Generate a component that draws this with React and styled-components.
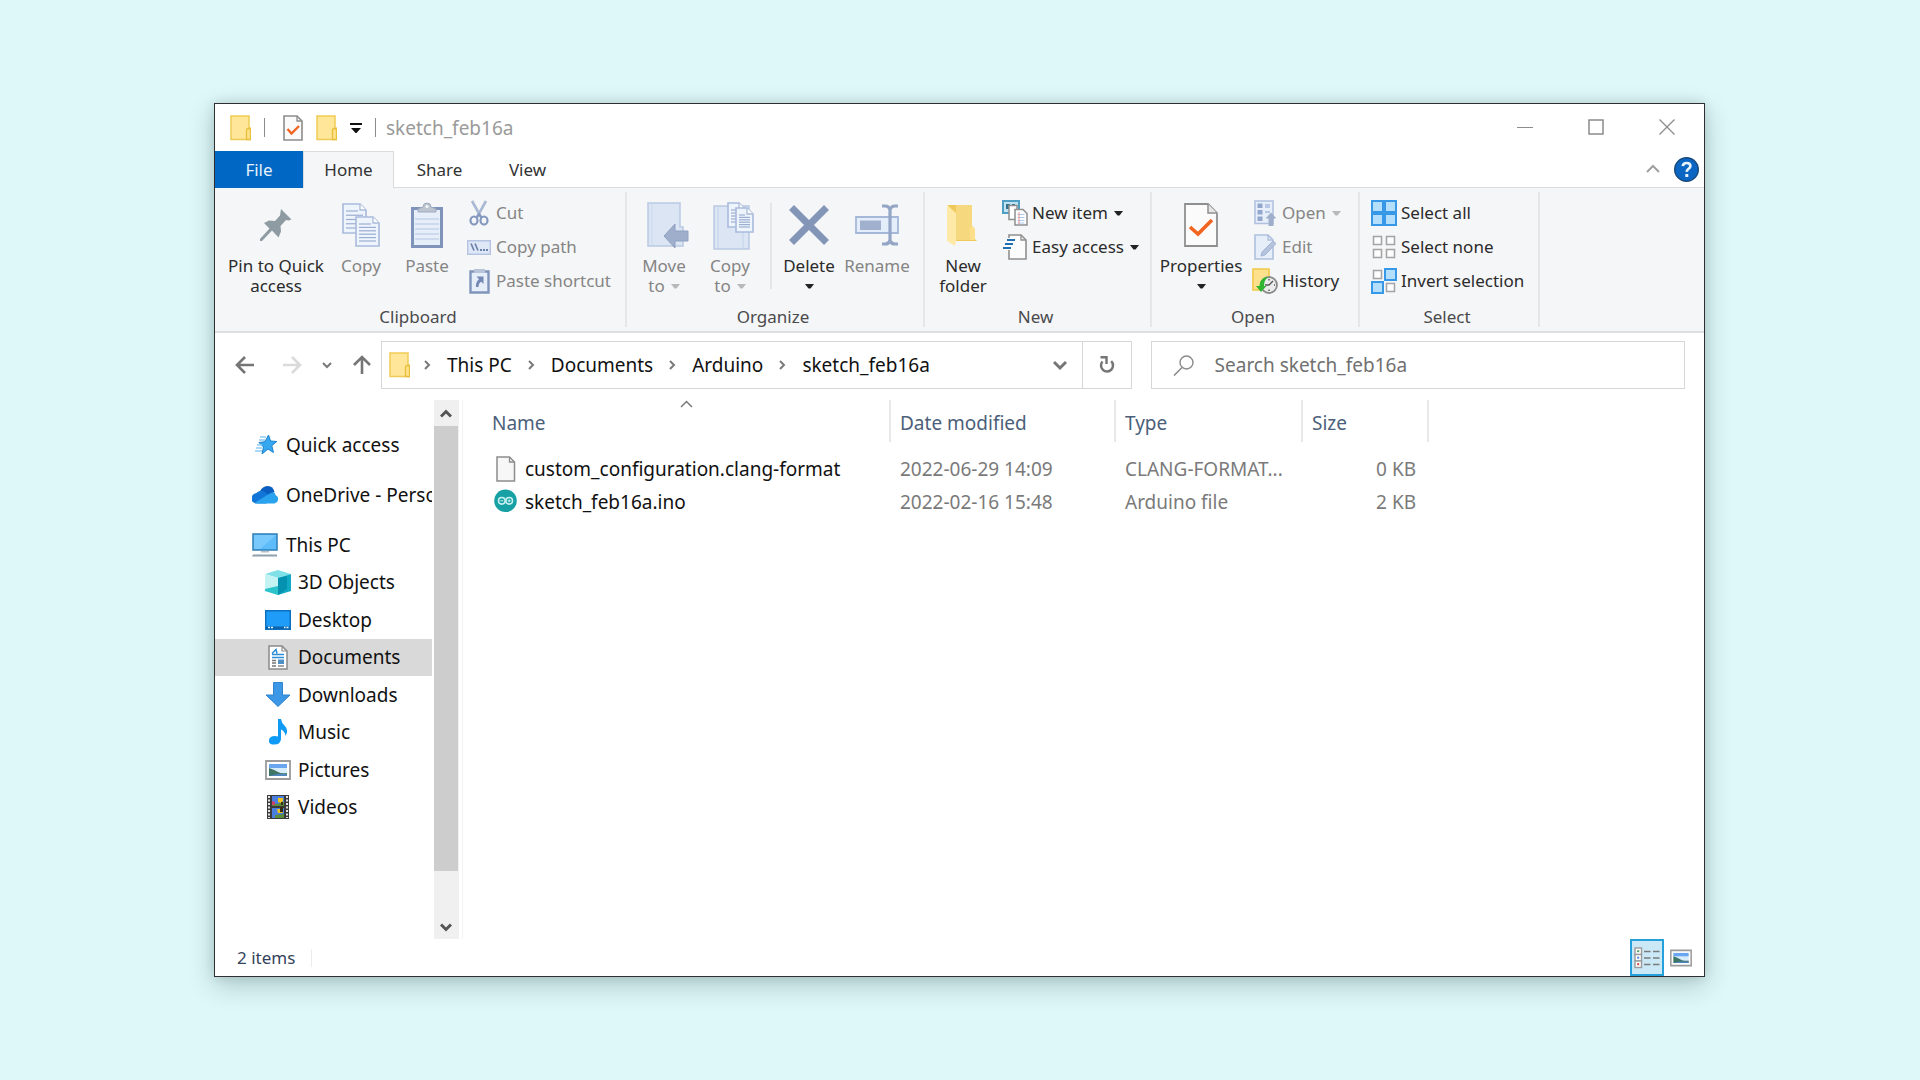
import React from "react";
import styled, { createGlobalStyle, css } from "styled-components";

const GlobalStyle = createGlobalStyle`
  *, *::before, *::after { box-sizing: border-box; }
  body {
    margin: 0;
    background: #def7f8;
    color: #111;
    font-family: "Noto Sans", "Open Sans", sans-serif;
    font-size: 19px;
    line-height: 26px;
  }
  button, input { font: inherit; color: inherit; }
  svg { display: block; flex: none; }
`;

const plainButton = css`
  border: 0;
  padding: 0;
  background: none;
  white-space: nowrap;
`;

/* ---------- window ---------- */

const Page = styled.main`
  display: flex;
  min-height: 100vh;
  padding: 103px 215px 103px 214px;
`;

const Window = styled.section`
  flex: 1;
  min-width: 0;
  display: flex;
  flex-direction: column;
  background: #fff;
  border: 1px solid #2f2f33;
  box-shadow: 0 8px 24px rgba(20, 50, 50, 0.24), 0 0 10px rgba(20, 50, 50, 0.12);
`;

const TitleBar = styled.header`
  display: flex;
  align-items: center;
  height: 47px;
  padding: 0 2px 0 15px;
`;

const QuickTools = styled.div`
  display: flex;
  align-items: center;
  gap: 13px;
`;

const ToolButton = styled.button`
  ${plainButton}
`;

const Bar = styled.span`
  width: 1px;
  height: 19px;
  background: #8c8c8c;
  margin-right: ${(p) => (p.$wide ? "5px" : "0")};
`;

const Title = styled.h1`
  flex: 1;
  margin: 0;
  padding-left: 10px;
  font-size: 19px;
  font-weight: 400;
  color: #9a9a9a;
`;

const CaptionButton = styled.button`
  ${plainButton}
  display: grid;
  place-items: center;
  align-self: flex-start;
  width: 71px;
  height: 45px;
`;

/* ---------- tabs ---------- */

const TabRow = styled.nav`
  display: flex;
  align-items: center;
  height: 37px;
  padding-right: 5px;
  border-bottom: 1px solid #dadbdc;
`;

const Tab = styled.button`
  ${plainButton}
  align-self: stretch;
  width: ${(p) => p.$width}px;
  margin-bottom: -1px;
  font-size: 17px;
  color: #333;
  ${(p) => p.$kind === "file" && "background: #0067c5; color: #e8f2fb;"}
  ${(p) =>
    p.$kind === "active" &&
    "background: #f5f6f7; border: 1px solid #dadbdc; border-bottom: 0;"}
`;

const Spacer = styled.span`
  flex: 1;
`;

const HelpButton = styled.button`
  ${plainButton}
  margin-left: 14px;
`;

/* ---------- ribbon ---------- */

const Ribbon = styled.div`
  display: flex;
  padding: 4px 0;
  background: #f5f6f7;
  border-bottom: 2px solid #dddfe1;
  font-size: 17px;
  line-height: 20px;
`;

const Group = styled.section`
  width: ${(p) => p.$width}px;
  height: 135px;
  display: flex;
  flex-direction: column;
  justify-content: space-between;
  border-right: 2px solid #e4e6e8;
`;

const GroupBody = styled.div`
  display: flex;
  padding-left: ${(p) => p.$inset}px;
`;

const GroupLabel = styled.h2`
  margin: 0;
  padding-right: 4px;
  font-size: 17px;
  font-weight: 400;
  text-align: center;
  color: #4a4a4d;
`;

const BigButton = styled.button`
  ${plainButton}
  width: ${(p) => p.$width}px;
  display: flex;
  flex-direction: column;
  align-items: center;
  padding-top: 10px;
  color: ${(p) => (p.$off ? "#858585" : "#2b2b2b")};
`;

const BigIcon = styled.span`
  display: grid;
  place-items: center;
  height: 46px;
  margin-bottom: 8px;
`;

const Line = styled.span`
  display: flex;
  align-items: center;
  gap: 6px;
  height: 20px;
`;

const InnerRule = styled.span`
  width: 2px;
  height: 86px;
  margin: 11px 4px 0 7px;
  background: #e4e6e8;
`;

const SmallList = styled.div`
  display: flex;
  flex-direction: column;
  padding-top: 4px;
  margin-left: ${(p) => p.$gap}px;
`;

const SmallButton = styled.button`
  ${plainButton}
  display: flex;
  align-items: center;
  height: 34px;
  color: ${(p) => (p.$off ? "#858585" : "#2b2b2b")};
`;

const SmallIcon = styled.span`
  display: grid;
  place-items: center;
  width: 26px;
  margin-right: 4px;
`;

const CaretSlot = styled.span`
  margin-left: 6px;
`;

/* ---------- address row ---------- */

const AddressRow = styled.div`
  display: flex;
  align-items: center;
  height: 64px;
  padding: 0 19px 0 20px;
`;

const NavButtons = styled.div`
  display: flex;
  align-items: center;
  gap: 20px;
  margin-right: 9px;
  button:first-child { margin-right: 7px; }
`;

const AddressBox = styled.div`
  flex: 750 1 750px;
  min-width: 0;
  display: flex;
  align-items: center;
  height: 48px;
  padding-left: 7px;
  border: 1px solid #d6d6d6;
`;

const Crumbs = styled.ol`
  display: flex;
  align-items: center;
  flex: 1;
  margin: 0;
  padding: 0 0 0 12px;
  list-style: none;
`;

const Crumb = styled.li`
  display: flex;
  align-items: center;
  gap: 15px;
  margin-right: 14px;
`;

const Link = styled.a`
  color: inherit;
  text-decoration: none;
  white-space: nowrap;
`;

const EndButton = styled.button`
  ${plainButton}
  display: grid;
  place-items: center;
  width: ${(p) => p.$width}px;
  height: 46px;
  border-left: ${(p) => (p.$ruled ? "1px solid #d6d6d6" : "0")};
`;

const SearchBox = styled.label`
  flex: 534 1 534px;
  min-width: 0;
  display: flex;
  align-items: center;
  gap: 21px;
  height: 48px;
  margin-left: 19px;
  padding-left: 21px;
  border: 1px solid #d6d6d6;
`;

const SearchInput = styled.input`
  flex: 1;
  min-width: 0;
  padding: 0;
  border: 0;
  outline: 0;
  background: none;
  &::placeholder { color: #707070; opacity: 1; }
`;

/* ---------- body ---------- */

const Body = styled.div`
  flex: 1;
  display: flex;
  min-height: 0;
  padding-top: 3px;
`;

const Sidebar = styled.nav`
  width: 217px;
  padding-top: 26px;
  overflow: hidden;
`;

const NavItem = styled.a`
  display: flex;
  align-items: center;
  gap: ${(p) => (p.$child ? "7px" : "8px")};
  height: ${(p) => (p.$root ? "38px" : "auto")};
  margin-bottom: ${(p) => (p.$root ? "12px" : "0")};
  padding-left: ${(p) => (p.$child ? "50px" : "37px")};
  background: ${(p) => (p.$current ? "#d9d9d9" : "transparent")};
  color: #111;
  text-decoration: none;
  white-space: nowrap;
`;

const NavIcon = styled.span`
  display: grid;
  place-items: center;
  width: 26px;
`;

const Tree = styled.div`
  display: grid;
  grid-auto-rows: 1fr;
  height: 300px;
`;

const ScrollTrack = styled.div`
  display: flex;
  flex-direction: column;
  width: 25px;
  margin-left: 2px;
  background: #f0f0f0;
`;

const ScrollButton = styled.button`
  ${plainButton}
  display: grid;
  place-items: center;
  height: 26px;
  padding: 2px 1px 0 0;
`;

const ScrollThumb = styled.div`
  flex: 445;
  margin-right: 1px;
  background: #cdcdcd;
`;

const ScrollRest = styled.div`
  flex: 42;
`;

const Files = styled.div`
  flex: 1;
  margin-left: 3px;
  border-left: 1px solid #f3f3f3;
`;

const Table = styled.table`
  width: 966px;
  table-layout: fixed;
  border-collapse: separate;
  border-spacing: 0;
`;

const Head = styled.th`
  position: relative;
  width: ${(p) => p.$width}px;
  height: 42px;
  padding: 3px 0 0 ${(p) => (p.$first ? "29px" : "9px")};
  border-right: 2px solid #e8e8e8;
  color: #4c607a;
  font-weight: 400;
  text-align: left;
`;

const SortMark = styled.span`
  position: absolute;
  top: 0;
  left: 217px;
`;

const GapRow = styled.tr`
  height: 10px;
`;

const Cell = styled.td`
  height: 33px;
  padding: 0 ${(p) => (p.$end ? "13px" : "0")} 0 ${(p) => (p.$first ? "31px" : "9px")};
  color: ${(p) => (p.$first ? "#111" : "#7a7a7a")};
  text-align: ${(p) => (p.$end ? "right" : "left")};
  white-space: nowrap;
`;

const FileName = styled.span`
  display: flex;
  align-items: center;
  gap: 8px;
`;

/* ---------- status bar ---------- */

const StatusBar = styled.footer`
  display: flex;
  align-items: center;
  height: 37px;
  padding: 0 6px 0 22px;
  font-size: 17px;
  color: #34435c;
`;

const StatusRule = styled.span`
  width: 1px;
  height: 18px;
  margin-left: 16px;
  background: #ececec;
`;

const ViewButton = styled.button`
  ${plainButton}
  display: grid;
  place-items: center;
  width: 34px;
  height: 37px;
  ${(p) => p.$on && "background: #cbe8f6; border: 2px solid #26a0da;"}
`;

/* ---------- icons ---------- */

const Svg = ({ w, h, children, ...rest }) => (
  <svg width={w} height={h} viewBox={`0 0 ${w} ${h}`} fill="none" aria-hidden="true" {...rest}>
    {children}
  </svg>
);

const Caret = ({ color = "#222" }) => (
  <Svg w={9} h={5}>
    <path d="M0 0h9L5.500 4.500h-2z" fill={color} />
  </Svg>
);

const FolderIcon = () => (
  <Svg w={21} h={26}>
    <path d="M1 1h18v12h1.500v11.500H1z" fill="#ffe699" stroke="#efcb55" strokeWidth="1.500" />
    <path d="M16.500 24.500V15.500q0-2 2-2t2 2v9z" fill="#ffe28a" stroke="#e8bf3c" strokeWidth="1.300" />
  </Svg>
);

const CheckDocIcon = () => (
  <Svg w={20} h={26}>
    <path d="M1 1h13l5 5v19H1z" fill="#fafafa" stroke="#8d8d8d" strokeWidth="1.600" />
    <path d="M14 1v5h5" stroke="#8d8d8d" strokeWidth="1.300" />
    <path d="M4.500 14l4 4.500L16 11" stroke="#f2641f" strokeWidth="2.400" />
  </Svg>
);

const CustomizeIcon = () => (
  <Svg w={12} h={10}>
    <path d="M0 0h12v2H0zM1 5h10L6.500 10h-1z" fill="#111" />
  </Svg>
);

const Chevron = ({ dir = "down", size = 6, color = "#7a7a7a", stroke = 2 }) => {
  const turn = { down: 0, up: 180, right: -90 }[dir];
  const box = size * 2 + 2;
  const c = box / 2;
  return (
    <Svg w={box} h={box}>
      <path
        d={`M1 ${c - size / 2}L${c} ${c + size / 2}L${box - 1} ${c - size / 2}`}
        stroke={color}
        strokeWidth={stroke}
        transform={`rotate(${turn} ${c} ${c})`}
      />
    </Svg>
  );
};

const HelpIcon = () => (
  <Svg w={25} h={25}>
    <circle cx="12.500" cy="12.500" r="11.800" fill="#0a66c2" stroke="#17497c" strokeWidth="1.400" />
    <path d="M8.800 9.200q.3-3.200 3.900-3.200t3.700 3q0 1.700-1.900 2.900t-1.700 3" stroke="#e9f3fc" strokeWidth="2.700" />
    <path d="M11.300 17h3v3h-3z" fill="#e9f3fc" />
  </Svg>
);

const PinIcon = () => (
  <Svg w={32} h={32}>
    <path
      d="M21 0l10.500 10.500-3 1-2.500-.5-5.500 6 .5 5.500-2.500 6-6.500-7L2 32H0v-2L9.500 19.500 4 14l5-2.500 6 .5 5-5.500z"
      fill="#8f9ba2"
    />
  </Svg>
);

const Sheet = ({ x, y, w, h, rows }) => {
  const step = (h - 12) / (rows - 1);
  return (
    <g>
      <path d={`M${x} ${y}h${w - 6}l6 6v${h - 6}h-${w}z`} fill="#eef4fc" stroke="#a9badb" strokeWidth="1.600" />
      <path d={`M${x + w - 6} ${y}v6h6`} stroke="#a9badb" strokeWidth="1.300" fill="#fff" />
      {Array.from({ length: rows }, (_, i) => (
        <path
          key={i}
          d={`M${x + 3} ${y + 7 + i * step}h${i === 0 ? w - 11 : w - 6}`}
          stroke="#9badd0"
          strokeWidth="1.200"
        />
      ))}
    </g>
  );
};

const CopyIcon = () => (
  <Svg w={38} h={44}>
    <Sheet x={1} y={1} w={23} h={29} rows={5} />
    <Sheet x={14} y={14} w={23} h={29} rows={6} />
  </Svg>
);

const PasteIcon = () => (
  <Svg w={32} h={46}>
    <path d="M1.500 6.500h29v38h-29z" fill="#e6eefa" stroke="#8094bb" strokeWidth="3" />
    <path d="M4 17h24M4 22h24M4 27h24M4 32h24M4 37h24" stroke="#c5d3ea" strokeWidth="1.300" />
    <path d="M7 10V7l5-2q0-4 4-4t4 4l5 2v3z" fill="#bcc4d0" stroke="#a0abbe" />
    <circle cx="16" cy="4.500" r="1.500" fill="#f5f6f7" />
  </Svg>
);

const CutIcon = () => (
  <Svg w={20} h={26}>
    <path d="M3 1l9.500 17M17 1L7.500 18" stroke="#a9b8d3" strokeWidth="2.600" />
    <ellipse cx="5" cy="20.500" rx="3.500" ry="4" stroke="#8397bf" strokeWidth="2.200" />
    <ellipse cx="15" cy="20.500" rx="3.500" ry="4" stroke="#8397bf" strokeWidth="2.200" />
    <path d="M8 17l2-3 2 3" stroke="#8397bf" strokeWidth="2" />
  </Svg>
);

const CopyPathIcon = () => (
  <Svg w={24} h={15}>
    <path d="M.7.7h22.600v13.600H.7z" fill="#dfe8f6" stroke="#b5c4e0" strokeWidth="1.400" />
    <path d="M4 3.500l3 7M8 3.500l3 7" stroke="#6d82ad" strokeWidth="1.700" />
    <path d="M13 9h2v2h-2zM16 9h2v2h-2zM19 9h2v2h-2z" fill="#6d82ad" />
  </Svg>
);

const PasteShortcutIcon = () => (
  <Svg w={21} h={26}>
    <path d="M1.500 3.500h18v21h-18z" fill="#e6eefa" stroke="#8094bb" strokeWidth="2.400" />
    <path d="M5 1h11v4H5z" fill="#b7c3d8" />
    <path d="M7.500 8.500h7v7.500l-2.200-2.200q-2.800 1.200-2.800 5.200H7q-.5-5 3-7.800z" fill="#7488b3" />
  </Svg>
);

const MoveToIcon = () => (
  <Svg w={50} h={46}>
    <g transform="translate(8 0)">
      <path d="M1 1h32v24h3v19H1z" fill="#dbe5f4" stroke="#b9c9e2" strokeWidth="1.500" />
      <path d="M5 1v43" stroke="#cbd8ec" />
      <path d="M17 34L28 22v7h13v10H28v7z" fill="#9eaecb" stroke="#8fa1c3" />
    </g>
  </Svg>
);

const CopyToIcon = () => (
  <Svg w={50} h={48}>
    <g transform="translate(8 0)">
      <path d="M1 4h35v43H1z" fill="#dbe5f4" stroke="#b9c9e2" strokeWidth="1.500" />
      <path d="M5 4v43M30 30v16" stroke="#c3d2e8" />
      <Sheet x={15} y={1} w={17} h={24} rows={5} />
      <Sheet x={23} y={6} w={17} h={24} rows={6} />
    </g>
  </Svg>
);

const DeleteIcon = () => (
  <Svg w={40} h={40}>
    <path d="M2.500 2.500l35 35M37.500 2.500l-35 35" stroke="#8496b8" strokeWidth="7" />
  </Svg>
);

const RenameIcon = () => (
  <Svg w={44} h={42}>
    <path d="M1 13h42v16H1z" fill="#e4eefb" stroke="#a6b8d8" strokeWidth="1.800" />
    <path d="M5 16.500h21v9.500H5z" fill="#a0b0cd" />
    <path d="M27 2h3q4 0 5 4v30q-1 4-5 4h-3M43 2h-3q-4 0-5 4M43 40h-3q-4 0-5-4" stroke="#94a6c6" strokeWidth="3.200" />
  </Svg>
);

const NewFolderIcon = () => (
  <Svg w={32} h={43}>
    <path d="M1 1h24v21l3 3v10l2 2H9z" fill="#eec95a" />
    <path d="M9 1h16v35H9z" fill="#f6d97e" />
    <path d="M0 1l9 8v27l-1 6-8-5z" fill="#ffe9a6" />
    <path d="M25 22l3 3v11h-5V24z" fill="#ffe08a" />
  </Svg>
);

const NewItemIcon = () => (
  <Svg w={26} h={26}>
    <path d="M1 1h16v12H1z" fill="#bfe3f3" stroke="#4f9fc4" strokeWidth="2" />
    <path d="M4 4h4v5H4zM10 4h3v5h-3z" fill="#38708f" />
    <path d="M7 5.500h8v14H7z" fill="#fff" stroke="#8f8f8f" strokeWidth="1.500" />
    <path d="M13 9.500h8l4 4V25H13z" fill="#fff" stroke="#8f8f8f" strokeWidth="1.500" />
    <path d="M15.500 14.500h7M15.500 17.500h7M15.500 20.500h7M15.500 23h7" stroke="#a9c9ee" />
    <path d="M17 12v12" stroke="#ef8f8f" />
  </Svg>
);

const EasyAccessIcon = () => (
  <Svg w={25} h={26}>
    <path d="M6 1h12l5 5v19H6z" fill="#fcfcfc" stroke="#8f8f8f" strokeWidth="1.600" />
    <path d="M18 1v5h5" stroke="#8f8f8f" strokeWidth="1.300" />
    <path d="M5 6h7M3 10h7M1 14h7" stroke="#fff" strokeWidth="4" />
    <path d="M4 6h8M2 10h8M0 14h8" stroke="#1f6fb2" strokeWidth="2" />
  </Svg>
);

const PropertiesIcon = () => (
  <Svg w={34} h={44}>
    <path d="M1 1h23l9 9v33H1z" fill="#fbfbfc" stroke="#8f8f8f" strokeWidth="1.800" />
    <path d="M24 1v9h9" fill="#e6e6e6" stroke="#8f8f8f" strokeWidth="1.500" />
    <path d="M6 24l8 7L28 17" stroke="#f2641f" strokeWidth="3.600" />
  </Svg>
);

const OpenIcon = () => (
  <Svg w={22} h={26}>
    <path d="M1 1h18v22.500H1z" fill="#e6eefa" stroke="#b0c0de" strokeWidth="1.500" />
    <path d="M3.500 3.500h5v4.500h-5zM3.500 10h5v4.500h-5zM3.500 16.500h5V21h-5z" fill="#93a6cb" />
    <path d="M11 5h5M11 7h5M11 12h5" stroke="#a9badb" strokeWidth="1.300" />
    <path d="M17 12.500l5.500 6H19.500V26h-5v-7.500h-3z" fill="#9fafcb" />
  </Svg>
);

const EditIcon = () => (
  <Svg w={22} h={26}>
    <path d="M1 1h13l5 5v19H1z" fill="#e6eefa" stroke="#b0c0de" strokeWidth="1.600" />
    <path d="M14 1v5h5" stroke="#b0c0de" strokeWidth="1.300" />
    <path d="M7 22l1-4L19 7l3 2.500L11 21z" fill="#b5c3dc" stroke="#a2b3d3" />
  </Svg>
);

const HistoryIcon = () => (
  <Svg w={26} h={26}>
    <path d="M1 1h16v21H1z" fill="#ffe08c" stroke="#f0c948" strokeWidth="1.600" />
    <circle cx="17" cy="17" r="8" fill="#ececec" stroke="#8b8b8b" strokeWidth="1.800" />
    <path d="M17 17l4-4M17 17h-4M17 11v1.500M17 21.500V23M22 17h1" stroke="#555" strokeWidth="1.400" />
    <path d="M14 9q-6 1.500-6.500 9H4l5 6 5.500-6H12q0-6 4-9z" fill="#2fb52f" />
  </Svg>
);

const Tiles = ({ on }) => (
  <Svg w={26} h={26}>
    {[0, 1, 2, 3].map((i) => {
      const x = (i % 2) * 13;
      const y = Math.floor(i / 2) * 13;
      return on[i] ? (
        <rect key={i} x={x + 1} y={y + 1} width="11" height="11" fill="#b3defc" stroke="#3698e6" strokeWidth="2" />
      ) : (
        <rect key={i} x={x + 2.500} y={y + 2.500} width="8" height="8" fill="#fdfdfd" stroke="#a3a3a3" strokeWidth="1.500" />
      );
    })}
  </Svg>
);

const Arrow = ({ dir, color = "#757575" }) => (
  <Svg w={20} h={20}>
    <path
      d="M10 2L2 10l8 8M2 10h17"
      stroke={color}
      strokeWidth="2.600"
      transform={`rotate(${{ left: 0, right: 180, up: 90 }[dir]} 10 10)`}
    />
  </Svg>
);

const RefreshIcon = () => (
  <Svg w={18} h={20}>
    <path d="M13.200 6.200A6 6 0 1 1 4.500 6.500" stroke="#757575" strokeWidth="2.500" />
    <path d="M2.500 2.200h6v6.800" stroke="#757575" strokeWidth="2.400" />
  </Svg>
);

const SearchIcon = () => (
  <Svg w={21} h={21}>
    <circle cx="13.500" cy="7.500" r="6.500" stroke="#8a8a8a" strokeWidth="1.400" />
    <path d="M9 12.500L1 20.500" stroke="#8a8a8a" strokeWidth="1.600" />
  </Svg>
);

const StarIcon = () => (
  <Svg w={24} h={20}>
    <path d="M15.500 0l2 6 6.300.5-5 4.200 1.700 6.800-5.500-3.500L9 19l1.500-7L6 7.500l6-.8z" fill="#36a8ef" stroke="#1b82cf" />
    <path d="M7 2h6M6 5h6M4 10h5M3 13h6M2 16h7" stroke="#8fcbf5" strokeWidth="1.300" />
  </Svg>
);

const CloudIcon = () => (
  <Svg w={26} h={18}>
    <path d="M8 5q3-5 8-5t6.500 6L14 11z" fill="#0a5fc0" />
    <path d="M5 17.500a5 5 0 0 1-1-10.200Q8 3 12.500 6l6 4-4 7.500z" fill="#1176d8" />
    <path d="M3 16.500L17 8q6-4 6.500 1a4.500 4.500 0 0 1-1 8.500H5z" fill="#2aa3ee" />
  </Svg>
);

const PcIcon = () => (
  <Svg w={26} h={24}>
    <path d="M1 1h24v16H1z" fill="#5fbcfb" stroke="#2d7fb8" strokeWidth="1.500" />
    <path d="M2 2h22L8 16H2z" fill="#8bd2ff" opacity=".6" />
    <path d="M9 18h8v1.500H9z" fill="#b4c1cb" />
    <path d="M1 21.500h24v2H0z" fill="#8fa0ae" />
  </Svg>
);

const CubeIcon = () => (
  <Svg w={26} h={25}>
    <path d="M0 4L13 0l13 4-13 4z" fill="#7fe0e8" />
    <path d="M0 4l13 4v17L0 21z" fill="#c5f3f3" />
    <path d="M26 4L13 8v17l13-4z" fill="#12a9c4" />
    <path d="M13 8l9-2v13l-9 6z" fill="#0592b0" />
    <path d="M0 19l13-3v9L0 21z" fill="#2dc3cb" />
  </Svg>
);

const DesktopIcon = () => (
  <Svg w={26} h={20}>
    <path d="M.7.7h24.600v18.600H.7z" fill="#1e9cf7" stroke="#0c6fc0" strokeWidth="1.400" />
    <path d="M1 16.500h24v2.500H1z" fill="#0b62ad" />
    <path d="M3 17.500h2M6 17.500h2M19 17.500h1.500M21.500 17.500h2" stroke="#e7f5ff" strokeWidth="1.300" />
  </Svg>
);

const DocumentsIcon = () => (
  <Svg w={20} h={25}>
    <path d="M1 1h13l5 5v18H1z" fill="#fff" stroke="#8a8a8a" strokeWidth="1.500" />
    <path d="M14 1v5h5" stroke="#8a8a8a" strokeWidth="1.200" />
    <path d="M4 8.500l4-4 1 4M4 12.500h12M4 9.500h12" stroke="#2a8dd6" strokeWidth="1.500" />
    <path d="M4 15.500h4M4 18h4M4 21h4" stroke="#777" strokeWidth="1.300" />
    <path d="M10 14.500h6V19h-6z" fill="#4d90c8" />
    <path d="M10 21h6" stroke="#777" strokeWidth="1.300" />
  </Svg>
);

const DownloadIcon = () => (
  <Svg w={26} h={25}>
    <path d="M8.500.500h9V13H25L13 24.500 1 13h7.500z" fill="#3c98e6" stroke="#2f83cf" />
  </Svg>
);

const MusicIcon = () => (
  <Svg w={19} h={26}>
    <path d="M9 0h3q.5 4 3.500 6.500t2.500 7l-1.500 3.500q-.5-5-4.500-6.500V20q-.5 5.500-6.500 5.500T0 21.500q0-4.500 6-4.500l3 .5z" fill="#0f9bf5" />
  </Svg>
);

const PictureIcon = ({ w = 26, h = 20 }) => (
  <svg width={w} height={h} viewBox="0 0 26 20" fill="none" aria-hidden="true">
    <path d="M1 1h24v18H1z" fill="#fff" stroke="#9b9b9b" strokeWidth="1.800" />
    <path d="M4 4h18v12H4z" fill="#d7ecfb" />
    <path d="M4 4h18v4H4z" fill="#6aa5f0" />
    <path d="M4 8q6 2 9 4t9 1v3H4z" fill="#3f7564" />
    <path d="M12 14h10v2H4z" fill="#4f86c0" />
  </svg>
);

const VideoIcon = () => (
  <Svg w={22} h={24}>
    <path d="M0 0h22v24H0z" fill="#3a3a3a" />
    <path d="M2 1v22M20 1v22" stroke="#e6e6e6" strokeWidth="2" strokeDasharray="2 1.500" />
    <path d="M5 1h12v10H5zM5 13h12v10H5z" fill="#4b7fdf" />
    <path d="M5 8l5 1 7-2v4H5zM8 20l9-1v4H8z" fill="#5b8d3c" />
    <path d="M11 3h5v3l-2 2-3-1zM10 14h4l2 4h-5z" fill="#f0c21c" />
    <path d="M5 6l3 1v3H5z" fill="#d0406a" />
    <path d="M13 12h3v5h-3zM14 7h2v3h-2z" fill="#3b2d12" />
  </Svg>
);

const BlankFileIcon = () => (
  <Svg w={23} h={26}>
    <path d="M3 1h12.500l5 5v19H3z" fill="#f7f7f7" stroke="#8d8d8d" strokeWidth="1.500" />
    <path d="M15.500 1v5h5" stroke="#8d8d8d" strokeWidth="1.300" />
  </Svg>
);

const ArduinoIcon = () => (
  <Svg w={23} h={26}>
    <circle cx="11.500" cy="11.800" r="11.300" fill="#17a1a5" />
    <circle cx="7.800" cy="11.800" r="3.300" stroke="#c9f1f1" strokeWidth="1.600" />
    <circle cx="15.200" cy="11.800" r="3.300" stroke="#c9f1f1" strokeWidth="1.600" />
    <path d="M6.300 11.800h3M13.700 11.800h3M15.200 10.300v3" stroke="#c9f1f1" />
  </Svg>
);

const DetailsIcon = () => (
  <Svg w={26} h={22}>
    {["#4c9b5b", "#4a7fe0", "#d43c3c"].map((c, i) => (
      <g key={c}>
        <rect x="1" y={1 + i * 6.500} width="6.500" height="6.500" fill="#fff" stroke="#9b9b9b" strokeWidth="1.400" />
        <rect x="3.200" y={3.200 + i * 6.500} width="2" height="2" fill={c} />
        <path d={`M10 ${4.500 + i * 6.500}h6.500M19 ${4.500 + i * 6.500}h6.500`} stroke="#7b7b7b" strokeWidth="1.600" />
      </g>
    ))}
  </Svg>
);

/* ---------- composed parts ---------- */

const Big = ({ icon, lines, width, off, caret }) => (
  <BigButton $width={width} $off={off} type="button">
    <BigIcon>{icon}</BigIcon>
    {lines.map((text, i) => (
      <Line key={i}>
        {text}
        {caret && i === lines.length - 1 && <Caret color={off ? "#b9b9b9" : "#222"} />}
      </Line>
    ))}
  </BigButton>
);

const Small = ({ icon, text, off, caret }) => (
  <SmallButton $off={off} type="button">
    <SmallIcon>{icon}</SmallIcon>
    {text}
    {caret && (
      <CaretSlot>
        <Caret color={off ? "#b9b9b9" : "#222"} />
      </CaretSlot>
    )}
  </SmallButton>
);

const treeItems = [
  { text: "This PC", icon: <PcIcon />, top: true },
  { text: "3D Objects", icon: <CubeIcon /> },
  { text: "Desktop", icon: <DesktopIcon /> },
  { text: "Documents", icon: <DocumentsIcon />, current: true },
  { text: "Downloads", icon: <DownloadIcon /> },
  { text: "Music", icon: <MusicIcon /> },
  { text: "Pictures", icon: <PictureIcon /> },
  { text: "Videos", icon: <VideoIcon /> },
];

const files = [
  {
    name: "custom_configuration.clang-format",
    icon: <BlankFileIcon />,
    date: "2022-06-29 14:09",
    type: "CLANG-FORMAT...",
    size: "0 KB",
  },
  {
    name: "sketch_feb16a.ino",
    icon: <ArduinoIcon />,
    date: "2022-02-16 15:48",
    type: "Arduino file",
    size: "2 KB",
  },
];

const crumbs = ["This PC", "Documents", "Arduino", "sketch_feb16a"];

export default function App() {
  return (
    <>
      <GlobalStyle />
      <Page>
        <Window>
          <TitleBar>
            <QuickTools>
              <FolderIcon />
              <Bar $wide />
              <ToolButton type="button" aria-label="Properties"><CheckDocIcon /></ToolButton>
              <ToolButton type="button" aria-label="New folder"><FolderIcon /></ToolButton>
              <ToolButton type="button" aria-label="Customize toolbar"><CustomizeIcon /></ToolButton>
              <Bar />
            </QuickTools>
            <Title>sketch_feb16a</Title>
            <CaptionButton type="button" aria-label="Minimize">
              <Svg w={16} h={16}><path d="M0 8.500h16" stroke="#8c8c8c" /></Svg>
            </CaptionButton>
            <CaptionButton type="button" aria-label="Maximize">
              <Svg w={16} h={16}><path d="M1 1h14v14H1z" stroke="#8c8c8c" strokeWidth="1.500" /></Svg>
            </CaptionButton>
            <CaptionButton type="button" aria-label="Close">
              <Svg w={16} h={16}><path d="M.5.5l15 15M15.500.5l-15 15" stroke="#8c8c8c" strokeWidth="1.300" /></Svg>
            </CaptionButton>
          </TitleBar>

          <TabRow>
            <Tab $width={88} $kind="file" type="button">File</Tab>
            <Tab $width={91} $kind="active" type="button">Home</Tab>
            <Tab $width={91} type="button">Share</Tab>
            <Tab $width={85} type="button">View</Tab>
            <Spacer />
            <ToolButton type="button" aria-label="Collapse ribbon">
              <Chevron dir="up" size={6} color="#a0a0a0" />
            </ToolButton>
            <HelpButton type="button" aria-label="Help"><HelpIcon /></HelpButton>
          </TabRow>

          <Ribbon>
            <Group $width={412}>
              <GroupBody $inset={6}>
                <Big width={110} icon={<PinIcon />} lines={["Pin to Quick", "access"]} />
                <Big width={60} off icon={<CopyIcon />} lines={["Copy"]} />
                <Big width={72} off icon={<PasteIcon />} lines={["Paste"]} />
                <SmallList $gap={3}>
                  <Small off icon={<CutIcon />} text="Cut" />
                  <Small off icon={<CopyPathIcon />} text="Copy path" />
                  <Small off icon={<PasteShortcutIcon />} text="Paste shortcut" />
                </SmallList>
              </GroupBody>
              <GroupLabel>Clipboard</GroupLabel>
            </Group>
            <Group $width={298}>
              <GroupBody $inset={4}>
                <Big width={66} off caret icon={<MoveToIcon />} lines={["Move", "to"]} />
                <Big width={66} off caret icon={<CopyToIcon />} lines={["Copy", "to"]} />
                <InnerRule />
                <Big width={66} caret icon={<DeleteIcon />} lines={["Delete", ""]} />
                <Big width={70} off icon={<RenameIcon />} lines={["Rename"]} />
              </GroupBody>
              <GroupLabel>Organize</GroupLabel>
            </Group>
            <Group $width={227}>
              <GroupBody $inset={6}>
                <Big width={64} icon={<NewFolderIcon />} lines={["New", "folder"]} />
                <SmallList $gap={7}>
                  <Small caret icon={<NewItemIcon />} text="New item" />
                  <Small caret icon={<EasyAccessIcon />} text="Easy access" />
                </SmallList>
              </GroupBody>
              <GroupLabel>New</GroupLabel>
            </Group>
            <Group $width={208}>
              <GroupBody $inset={4}>
                <Big width={90} caret icon={<PropertiesIcon />} lines={["Properties", ""]} />
                <SmallList $gap={6}>
                  <Small off caret icon={<OpenIcon />} text="Open" />
                  <Small off icon={<EditIcon />} text="Edit" />
                  <Small icon={<HistoryIcon />} text="History" />
                </SmallList>
              </GroupBody>
              <GroupLabel>Open</GroupLabel>
            </Group>
            <Group $width={180}>
              <GroupBody $inset={4}>
                <SmallList $gap={7}>
                  <Small icon={<Tiles on={[1, 1, 1, 1]} />} text="Select all" />
                  <Small icon={<Tiles on={[0, 0, 0, 0]} />} text="Select none" />
                  <Small icon={<Tiles on={[0, 1, 1, 0]} />} text="Invert selection" />
                </SmallList>
              </GroupBody>
              <GroupLabel>Select</GroupLabel>
            </Group>
          </Ribbon>

          <AddressRow>
            <NavButtons>
              <ToolButton type="button" aria-label="Back"><Arrow dir="left" /></ToolButton>
              <ToolButton type="button" aria-label="Forward"><Arrow dir="right" color="#dadada" /></ToolButton>
              <ToolButton type="button" aria-label="Recent locations"><Chevron size={4} /></ToolButton>
              <ToolButton type="button" aria-label="Up"><Arrow dir="up" /></ToolButton>
            </NavButtons>
            <AddressBox>
              <FolderIcon />
              <Crumbs>
                {crumbs.map((text) => (
                  <Crumb key={text}>
                    <Chevron dir="right" size={4} />
                    <Link href="#">{text}</Link>
                  </Crumb>
                ))}
              </Crumbs>
              <EndButton $width={44} type="button" aria-label="Previous locations">
                <Chevron size={6} color="#757575" stroke={3} />
              </EndButton>
              <EndButton $width={49} $ruled type="button" aria-label="Refresh"><RefreshIcon /></EndButton>
            </AddressBox>
            <SearchBox>
              <SearchIcon />
              <SearchInput type="text" aria-label="Search" placeholder="Search sketch_feb16a" />
            </SearchBox>
          </AddressRow>

          <Body>
            <Sidebar>
              <NavItem $root href="#"><NavIcon><StarIcon /></NavIcon>Quick access</NavItem>
              <NavItem $root href="#"><NavIcon><CloudIcon /></NavIcon>OneDrive - Personal</NavItem>
              <Tree>
                {treeItems.map((item) => (
                  <NavItem key={item.text} href="#" $child={!item.top} $current={item.current}>
                    <NavIcon>{item.icon}</NavIcon>
                    {item.text}
                  </NavItem>
                ))}
              </Tree>
            </Sidebar>
            <ScrollTrack>
              <ScrollButton type="button" aria-label="Scroll up">
                <Chevron dir="up" size={5} color="#555" stroke={3} />
              </ScrollButton>
              <ScrollThumb />
              <ScrollRest />
              <ScrollButton type="button" aria-label="Scroll down">
                <Chevron size={5} color="#555" stroke={3} />
              </ScrollButton>
            </ScrollTrack>
            <Files>
              <Table>
                <thead>
                  <tr>
                    <Head $width={428} $first scope="col">
                      Name
                      <SortMark><Svg w={13} h={8}><path d="M1 7l5.500-5.500L12 7" stroke="#7a7a7a" strokeWidth="1.500" /></Svg></SortMark>
                    </Head>
                    <Head $width={225} scope="col">Date modified</Head>
                    <Head $width={187} scope="col">Type</Head>
                    <Head $width={126} scope="col">Size</Head>
                  </tr>
                </thead>
                <tbody>
                  <GapRow aria-hidden="true" />
                  {files.map((file) => (
                    <tr key={file.name}>
                      <Cell $first><FileName>{file.icon}{file.name}</FileName></Cell>
                      <Cell>{file.date}</Cell>
                      <Cell>{file.type}</Cell>
                      <Cell $end>{file.size}</Cell>
                    </tr>
                  ))}
                </tbody>
              </Table>
            </Files>
          </Body>

          <StatusBar>
            2 items
            <StatusRule />
            <Spacer />
            <ViewButton $on type="button" aria-label="Details view"><DetailsIcon /></ViewButton>
            <ViewButton type="button" aria-label="Large icons view"><PictureIcon w={22} h={18} /></ViewButton>
          </StatusBar>
        </Window>
      </Page>
    </>
  );
}
